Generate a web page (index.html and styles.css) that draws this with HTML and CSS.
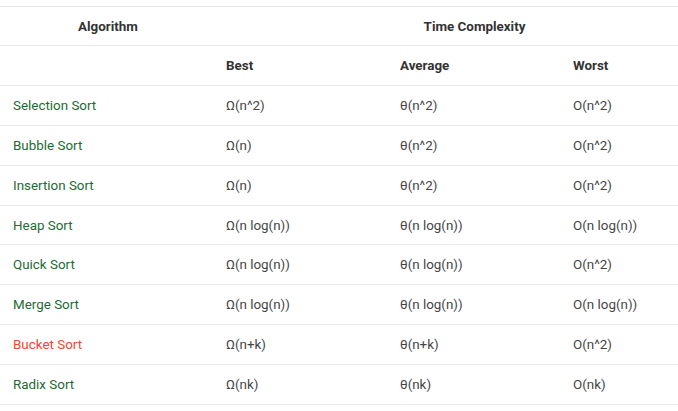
FILE: index.html
```html
<!DOCTYPE html>
<html>
<head>
<meta charset="utf-8">
<link rel="stylesheet" href="styles.css">
</head>
<body>
<div class="wrap">
<table class="cx">
  <colgroup>
    <col class="c1"><col class="c2"><col class="c3"><col class="c4">
  </colgroup>
  <thead>
    <tr class="first">
      <th class="h-center">Algorithm</th>
      <th class="h-center" colspan="3">Time Complexity</th>
    </tr>
    <tr>
      <th></th>
      <th class="h-left h-best">Best</th>
      <th class="h-left">Average</th>
      <th class="h-left h-worst">Worst</th>
    </tr>
  </thead>
  <tbody>
    <tr><td class="algo">Selection Sort</td><td>Ω(n^2)</td><td>θ(n^2)</td><td>O(n^2)</td></tr>
    <tr><td class="algo">Bubble Sort</td><td>Ω(n)</td><td>θ(n^2)</td><td>O(n^2)</td></tr>
    <tr><td class="algo">Insertion Sort</td><td>Ω(n)</td><td>θ(n^2)</td><td>O(n^2)</td></tr>
    <tr><td class="algo">Heap Sort</td><td>Ω(n log(n))</td><td>θ(n log(n))</td><td>O(n log(n))</td></tr>
    <tr><td class="algo">Quick Sort</td><td>Ω(n log(n))</td><td>θ(n log(n))</td><td>O(n^2)</td></tr>
    <tr><td class="algo">Merge Sort</td><td>Ω(n log(n))</td><td>θ(n log(n))</td><td>O(n log(n))</td></tr>
    <tr><td class="algo algo-red">Bucket Sort</td><td>Ω(n+k)</td><td>θ(n+k)</td><td>O(n^2)</td></tr>
    <tr><td class="algo">Radix Sort</td><td>Ω(nk)</td><td>θ(nk)</td><td>O(nk)</td></tr>
  </tbody>
</table>
</div>
</body>
</html>
```

FILE: styles.css
```css
html, body {
  margin: 0;
  padding: 0;
  background: #fff;
}
body {
  font-family: Roboto, "Liberation Sans", Arial, sans-serif;
  font-size: 13.4px;
  color: #454545;
  overflow: hidden;
}
.wrap {
  padding-top: 6px;
  width: 678px;
  overflow: hidden;
}
.cx {
  border-collapse: collapse;
  table-layout: fixed;
  width: 733px;
}
.c1 { width: 216px; }
.c2 { width: 174px; }
.c3 { width: 173px; }
.c4 { width: 170px; }
.cx tr {
  height: 39.9px;
}
.cx tr.first {
  height: 39px;
}
.cx th, .cx td {
  border-top: 1px solid #e8e8e8;
  border-bottom: 1px solid #e8e8e8;
  padding: 0 10px;
  vertical-align: middle;
  white-space: nowrap;
}
.cx th {
  font-weight: 700;
  color: #333;
}
.h-center { text-align: center; }
.h-left { text-align: left; }
.h-best { padding-left: 16px; }
.h-worst { padding-left: 9px; }
.cx td {
  text-align: left;
}
.cx td.algo {
  padding-left: 13px;
  color: #1d6b33;
}
.cx td.algo-red {
  color: #f2462e;
}
```
